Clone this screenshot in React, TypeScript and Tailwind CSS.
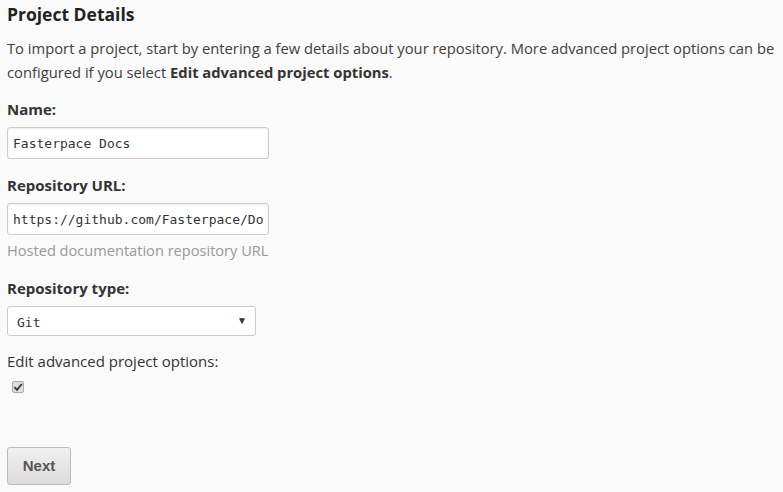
import { useState } from 'react'

function Label({ children }: { children: React.ReactNode }) {
  return <div className="text-[15px] font-bold text-[#333] leading-[20px] mb-[8px]">{children}</div>
}

export default function App() {
  const [name, setName] = useState('Fasterpace Docs')
  const [repo, setRepo] = useState('https://github.com/Fasterpace/Docs')
  const [checked, setChecked] = useState(true)

  return (
    <div className="min-h-[492px] w-[783px] bg-[#fafafa] px-[7px] pt-[2px] font-['Open_Sans',sans-serif] text-[#333]">
      <h1 className="text-[17.5px] font-bold text-[#222] leading-[24px]">Project Details</h1>

      <p className="mt-[10px] text-[14.75px] leading-[24px] text-[#404040]">
        To import a project, start by entering a few details about your repository. More advanced project options can be
        configured if you select <b className="text-[#333]">Edit advanced project options</b>.
      </p>

      <div className="mt-[15px]">
        <Label>Name:</Label>
        <input
          value={name}
          onChange={(e) => setName(e.target.value)}
          className="w-[262px] h-[32px] px-[5px] bg-white border border-[#ccc] rounded-[3px] shadow-[inset_0_1px_2px_rgba(0,0,0,0.08)] font-['DejaVu_Sans_Mono',monospace] text-[13px] text-[#333] outline-none"
        />
      </div>

      <div className="mt-[16px]">
        <Label>Repository URL:</Label>
        <input
          value={repo}
          onChange={(e) => setRepo(e.target.value)}
          className="w-[262px] h-[32px] px-[5px] bg-white border border-[#ccc] rounded-[3px] shadow-[inset_0_1px_2px_rgba(0,0,0,0.08)] font-['DejaVu_Sans_Mono',monospace] text-[13px] text-[#333] outline-none"
        />
        <div className="mt-[3px] text-[14.6px] leading-[24px] text-[#999]">Hosted documentation repository URL</div>
      </div>

      <div className="mt-[16px]">
        <Label>Repository type:</Label>
        <div className="relative w-[249px] h-[30px] bg-white border border-[#ccc] rounded-[3px]">
          <span className="absolute left-[9px] top-[6px] font-['DejaVu_Sans_Mono',monospace] text-[13px] text-[#333]">Git</span>
          <span className="absolute right-[8px] top-[6px] text-[10px] text-[#333]">▼</span>
        </div>
      </div>

      <div className="mt-[15px] text-[15px] leading-[20px] text-[#333]">Edit advanced project options:</div>
      <button
        onClick={() => setChecked(!checked)}
        className="mt-[10px] ml-[5px] flex items-center justify-center w-[12px] h-[12px] bg-[#ddd] border border-[#aaa] rounded-[2px]"
      >
        {checked && (
          <svg width="10" height="10" viewBox="0 0 10 10">
            <path d="M1.5 5.2 L4 7.8 L8.8 2" stroke="#333" strokeWidth="1.8" fill="none" />
          </svg>
        )}
      </button>

      <button className="mt-[54px] w-[64px] h-[38px] rounded-[3px] border border-[#bbb] bg-gradient-to-b from-[#f0f0f0] to-[#dcdcdc] font-['Liberation_Sans',sans-serif] font-bold text-[15px] text-[#555]">
        Next
      </button>
    </div>
  )
}
